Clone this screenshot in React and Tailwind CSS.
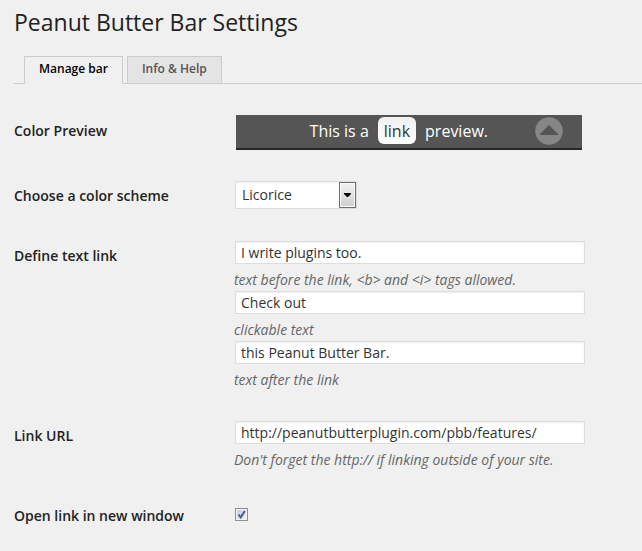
import { useState } from "react";

const FIELD =
  "block h-[23px] w-full rounded-none border border-[#dddddd] bg-white px-[5px] text-sm leading-[15px] text-[#333333] shadow-[inset_0_1px_2px_rgba(0,0,0,0.07)] outline-none";

function Row({ label, htmlFor, children }) {
  return (
    <div className="grid grid-cols-[221px_minmax(0,1fr)]">
      <div className="pt-5 text-sm font-semibold leading-[18px] text-[#222222]">
        {htmlFor ? <label htmlFor={htmlFor}>{label}</label> : label}
      </div>
      {children}
    </div>
  );
}

function TextField({ id, label, value, help }) {
  return (
    <div>
      <input
        id={id}
        type="text"
        aria-label={label}
        aria-describedby={id + "-help"}
        defaultValue={value}
        className={FIELD}
      />
      <p
        id={id + "-help"}
        className="-ml-px pb-px pt-[5px] text-sm italic leading-[21px] text-[#666666]"
      >
        {help}
      </p>
    </div>
  );
}

function ColorPreview() {
  return (
    <div className="ml-px flex h-[35px] max-w-[346px] items-start border-b-2 border-[#262626] bg-[#555555] pr-[19px] pt-0.5 text-white">
      <div className="flex flex-1 items-baseline justify-end gap-[9px] pr-[47px] text-base leading-[25px]">
        <span>This is a</span>
        <a
          href="#preview"
          className="rounded-md bg-linear-to-b from-[#f0f0f0] to-white px-1.5 pt-0.5 text-[#333333]"
        >
          link
        </a>
        <span>preview.</span>
      </div>
      <button type="button" aria-label="Close bar" className="block">
        <svg width="28" height="28" viewBox="0 0 28 28">
          <circle cx="14" cy="14" r="13.8" fill="#868686" />
          <path d="M14 8 L23 17 V18 H5 V17 Z" fill="#555555" />
        </svg>
      </button>
    </div>
  );
}

export default function App() {
  const [checked, setChecked] = useState(true);
  return (
    <main className="min-h-screen bg-[#f0f0f0] pl-3.5 pb-4 font-['Open_Sans',sans-serif] text-[#222222]">
      <h1 className="pt-2 text-[23px] font-normal leading-[29px]">
        Peanut Butter Bar Settings
      </h1>

      <nav className="mt-[19px] flex items-end gap-1 border-b border-[#cccccc] pl-2.5 text-xs font-semibold leading-4">
        <a
          href="#manage"
          aria-current="page"
          className="-mb-px border border-b-0 border-[#cccccc] bg-[#f0f0f0] px-3.5 pb-[7px] pt-1 text-black"
        >
          Manage bar
        </a>
        <a
          href="#info"
          className="border border-b-0 border-[#cccccc] bg-[#e4e4e4] px-3.5 pb-1.5 pt-1 text-[#555555]"
        >
          Info &amp; Help
        </a>
      </nav>

      <form className="pt-[18px]">
        <Row label="Color Preview">
          <div className="pb-[17px] pt-[13px]">
            <ColorPreview />
          </div>
        </Row>

        <Row label="Choose a color scheme" htmlFor="scheme">
          <div className="pb-[18px] pt-3.5">
            <div className="grid h-7 w-[122px]">
              <select
                id="scheme"
                defaultValue="Licorice"
                className="col-start-1 row-start-1 h-7 appearance-none rounded-none border border-[#dddddd] bg-white pl-1.5 text-sm leading-5 text-[#333333] shadow-[inset_0_1px_2px_rgba(0,0,0,0.07)] outline-none"
              >
                <option>Licorice</option>
              </select>
              <span className="pointer-events-none z-10 col-start-1 row-start-1 mr-px flex h-[26px] w-[17px] items-center justify-center place-self-center justify-self-end border border-[#707070] bg-linear-to-b from-[#f3f3f3] to-[#cfcfcf] shadow-[inset_0_0_0_1px_#fafafa]">
                <svg width="7" height="4" viewBox="0 0 7 4">
                  <path d="M0 0H7V1L4 4H3L0 1Z" fill="#000000" />
                </svg>
              </span>
            </div>
          </div>
        </Row>

        <Row label="Define text link">
          <div className="max-w-[350px] pb-4 pt-3.5">
            <TextField
              id="before"
              label="Text before the link"
              value="I write plugins too."
              help="text before the link, <b> and <i> tags allowed."
            />
            <TextField
              id="clickable"
              label="Clickable text"
              value="Check out"
              help="clickable text"
            />
            <TextField
              id="after"
              label="Text after the link"
              value="this Peanut Butter Bar."
              help="text after the link"
            />
          </div>
        </Row>

        <Row label="Link URL" htmlFor="url">
          <div className="max-w-[350px] pb-4 pt-3.5">
            <TextField
              id="url"
              label="Link URL"
              value="http://peanutbutterplugin.com/pbb/features/"
              help="Don't forget the http:// if linking outside of your site."
            />
          </div>
        </Row>

        <Row label="Open link in new window" htmlFor="new-window">
          <div className="pt-[21px]">
            <div className="grid size-[13px]">
              <input
                id="new-window"
                type="checkbox"
                checked={checked}
                onChange={(e) => setChecked(e.target.checked)}
                className="col-start-1 row-start-1 size-[13px] appearance-none border border-[#8e8f8f] bg-linear-to-br from-[#c5cbd5] to-[#f6f6f6] shadow-[inset_0_0_0_1px_#f4f4f4]"
              />
              {checked && (
                <svg
                  width="13"
                  height="13"
                  viewBox="0 0 13 13"
                  className="pointer-events-none z-10 col-start-1 row-start-1"
                >
                  <path
                    d="M3.5 6.5 L5.7 9.4 L9.8 3"
                    fill="none"
                    stroke="#4b5f9e"
                    strokeWidth="2"
                  />
                </svg>
              )}
            </div>
          </div>
        </Row>
      </form>
    </main>
  );
}
